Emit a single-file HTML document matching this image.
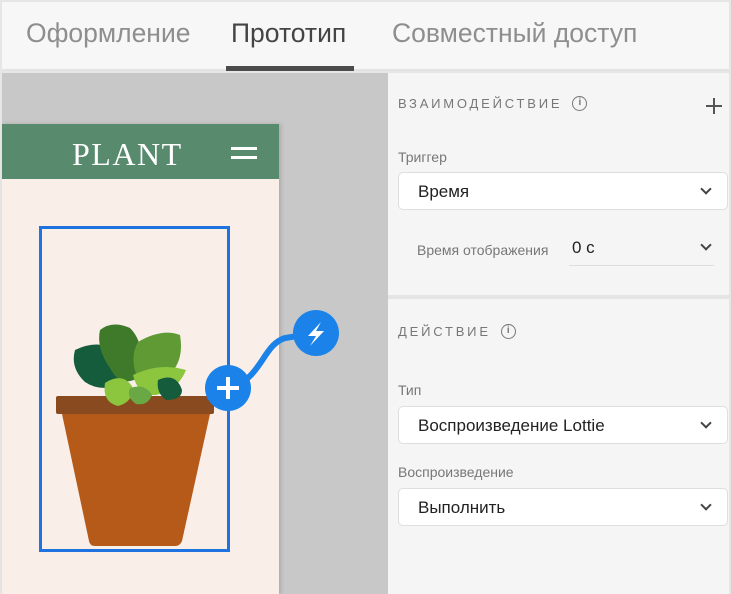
<!DOCTYPE html>
<html><head><meta charset="utf-8"><style>
*{margin:0;padding:0;box-sizing:border-box}
body{width:731px;height:594px;overflow:hidden;background:#e6e6e6;font-family:"Liberation Sans","DejaVu Sans",sans-serif;position:relative}
.abs{position:absolute}
.tabs{left:2px;top:2px;width:727px;height:69px;background:#f7f7f7;border-bottom:2px solid #e3e3e3}
.tab{position:absolute;top:16px;font-size:26.5px;color:#8e8e8e}
.canvas{left:2px;top:73px;width:386px;height:521px;background:#c8c8c8}
.panel{left:388px;top:73px;width:341px;height:521px;background:#f5f5f5}
.lbl{position:absolute;font-size:14px;color:#777}
.cap{position:absolute;font-size:13px;letter-spacing:2.8px;color:#777;display:flex;align-items:center}
.sel{position:absolute;left:10px;width:330px;height:38px;background:#fff;border:1px solid #dedede;border-radius:5px;font-size:17px;color:#222;padding:9px 0 0 19px}
.chev{position:absolute;right:17px;top:12px;width:8px;height:8px;border-right:2px solid #444;border-bottom:2px solid #444;transform:rotate(45deg)}
.info{display:inline-block;width:15px;height:15px;border:1.5px solid #777;border-radius:50%;font-size:10px;text-align:center;line-height:12px;letter-spacing:0;font-weight:bold;margin-left:10px}
</style></head><body>
<div class="abs tabs">
 <div class="tab" style="left:24px">Оформление</div>
 <div class="tab" style="left:229px;color:#444">Прототип</div>
 <div class="tab" style="left:390px">Совместный доступ</div>
 <div class="abs" style="left:224px;top:64px;width:128px;height:5px;background:#4b4b4b"></div>
</div>
<div class="abs canvas">
 <div class="abs" style="left:0;top:51px;width:277px;height:470px;background:#f9efe8;box-shadow:2px 0 4px rgba(0,0,0,.15)">
  <div class="abs" style="left:0;top:0;width:277px;height:55px;background:#588a6e">
   <div class="abs" style="left:70px;top:12px;font-family:'Liberation Serif',serif;font-size:32px;color:#fff;letter-spacing:1.5px">PLANT</div>
   <div class="abs" style="left:229px;top:23px;width:26px;height:3px;background:#fff"></div>
   <div class="abs" style="left:229px;top:32px;width:26px;height:3px;background:#fff"></div>
  </div>
 </div>
</div>
<svg class="abs" style="left:0;top:0" width="388" height="594">
 <rect x="40.5" y="227.5" width="188" height="323" fill="none" stroke="#1f73e0" stroke-width="3"/>
 <path d="M62 414 L210 414 L182 541 Q180 546 175 546 L95 546 Q90 546 89 541 Z" fill="#b55a19"/>
 <rect x="56" y="396" width="158" height="18" rx="2" fill="#8a4a20"/>
 <path d="M75 350 Q95 340 112 348 Q124 362 118 385 Q100 392 85 382 Q70 368 75 350Z" fill="#155c3c"/>
 <path d="M100 330 Q112 320 130 328 Q147 345 138 378 Q120 388 110 368 Q96 348 100 330Z" fill="#3f7a2b"/>
 <path d="M138 342 Q162 328 180 335 Q184 358 172 372 Q150 386 136 374 Q130 356 138 342Z" fill="#5f9a35"/>
 <path d="M105 383 Q122 372 132 386 Q134 402 118 406 Q102 402 105 383Z" fill="#8cc63f"/>
 <path d="M133 375 Q160 362 186 370 Q178 390 156 395 Q138 396 133 375Z" fill="#8cc63f"/>
 <path d="M158 380 Q176 372 182 390 Q182 400 166 400 Q156 393 158 380Z" fill="#155c3c"/>
 <path d="M130 388 Q145 383 152 395 Q148 406 136 404 Q126 397 130 388Z" fill="#6aa845"/>
 <path d="M228 388 C262 380 262 345 285 338 L316 333" fill="none" stroke="#1a82e8" stroke-width="6" stroke-linecap="round"/>
 <circle cx="228" cy="388" r="23" fill="#1a82e8"/>
 <path d="M228 377 V399 M217 388 H239" stroke="#fff" stroke-width="4"/>
 <circle cx="316" cy="333" r="23" fill="#1a82e8"/>
 <path d="M321 322 L308 336 L316 336 L310 346 L324 331 L316 331 Z" fill="#fff"/>
</svg>
<div class="abs panel">
 <div class="cap" style="left:10px;top:23px">ВЗАИМОДЕЙСТВИЕ<span class="info">i</span></div>
 <div class="abs" style="left:318px;top:32px;width:16px;height:2px;background:#555"></div>
 <div class="abs" style="left:325px;top:25px;width:2px;height:16px;background:#555"></div>
 <div class="lbl" style="left:10px;top:76px">Триггер</div>
 <div class="sel" style="top:99px">Время<div class="chev"></div></div>
 <div class="lbl" style="left:29px;top:169px">Время отображения</div>
 <div class="abs" style="left:184px;top:165px;font-size:17px;color:#222">0 с</div>
 <div class="abs" style="left:181px;top:192px;width:145px;height:1px;background:#ddd"></div>
 <div class="chev" style="right:19px;top:168px"></div>
 <div class="abs" style="left:0;top:222px;width:341px;height:4px;background:#e4e4e4"></div>
 <div class="cap" style="left:10px;top:251px">ДЕЙСТВИЕ<span class="info">i</span></div>
 <div class="lbl" style="left:10px;top:309px">Тип</div>
 <div class="sel" style="top:333px">Воспроизведение Lottie<div class="chev"></div></div>
 <div class="lbl" style="left:10px;top:391px">Воспроизведение</div>
 <div class="sel" style="top:415px">Выполнить<div class="chev"></div></div>
</div>
</body></html>
